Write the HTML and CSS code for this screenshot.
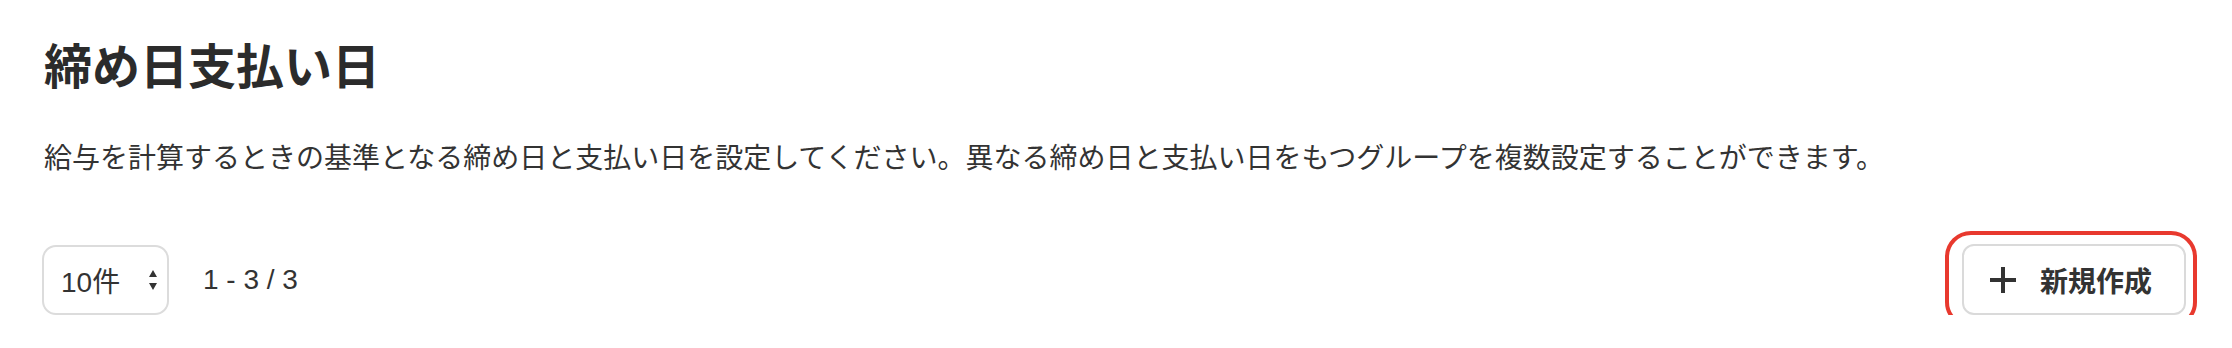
FILE: index.html
```html
<!DOCTYPE html>
<html lang="ja">
<head>
<meta charset="utf-8">
<title>締め日支払い日</title>
<link rel="stylesheet" href="styles.css">
</head>
<body>
<main class="page">
  <h1 class="title">締め日支払い日</h1>
  <p class="desc">給与を計算するときの基準となる締め日と支払い日を設定してください。異なる締め日と支払い日をもつグループを複数設定することができます。</p>
  <div class="toolbar">
    <div class="pager">
      <div class="select">
        <span class="select-value">10件</span>
        <svg class="select-arrow" width="8" height="20" viewBox="0 0 8 20"><path d="M4 0 L8 7 L0 7 Z M0 13 L8 13 L4 20 Z" fill="#333"/></svg>
      </div>
      <span class="range">1 - 3 / 3</span>
    </div>
    <div class="btn-wrap">
      <button class="btn" type="button">
        <svg class="plus" width="26" height="26" viewBox="0 0 26 26"><path d="M13 0 V26 M0 13 H26" stroke="#333" stroke-width="4"/></svg>
        <span class="btn-label">新規作成</span>
      </button>
      <span class="highlight"></span>
    </div>
  </div>
</main>
</body>
</html>
```

FILE: styles.css
```css
html, body {
  margin: 0;
  padding: 0;
  background: #ffffff;
}
body {
  font-family: "Liberation Sans", "Noto Sans CJK JP", sans-serif;
  color: #333333;
}
.page {
  padding: 44px 46px 0 42px;
}
.title {
  margin: 0;
  font-size: 48px;
  line-height: 48px;
  font-weight: 700;
  color: #2b2b2b;
  padding-left: 2px;
}
.desc {
  margin: 46px 0 0 0;
  font-size: 28px;
  line-height: 42px;
  color: #333333;
  padding-left: 2px;
}
.toolbar {
  margin-top: 64px;
  display: flex;
  justify-content: space-between;
  align-items: center;
}
.pager {
  display: flex;
  align-items: center;
}
.select {
  box-sizing: border-box;
  width: 127px;
  height: 70px;
  border: 2px solid #dcdcdc;
  border-radius: 14px;
  display: flex;
  align-items: center;
  justify-content: space-between;
  padding: 0 10px 0 17px;
}
.select-value {
  font-size: 28px;
  color: #333333;
}
.select-arrow {
  display: block;
}
.range {
  margin-left: 34px;
  font-size: 28px;
  color: #333333;
}
.btn-wrap {
  position: relative;
}
.btn {
  box-sizing: border-box;
  width: 224px;
  height: 71px;
  border: 2px solid #dadada;
  border-radius: 12px;
  background: #ffffff;
  display: flex;
  align-items: center;
  padding: 0 0 0 26px;
  gap: 24px;
  font-family: inherit;
  cursor: pointer;
}
.plus {
  display: block;
}
.btn-label {
  font-size: 28px;
  font-weight: 700;
  color: #333333;
}
.highlight {
  position: absolute;
  left: -17px;
  top: -13px;
  right: -11px;
  bottom: -13px;
  border: 4px solid #e8392e;
  border-radius: 26px;
  pointer-events: none;
}
```
